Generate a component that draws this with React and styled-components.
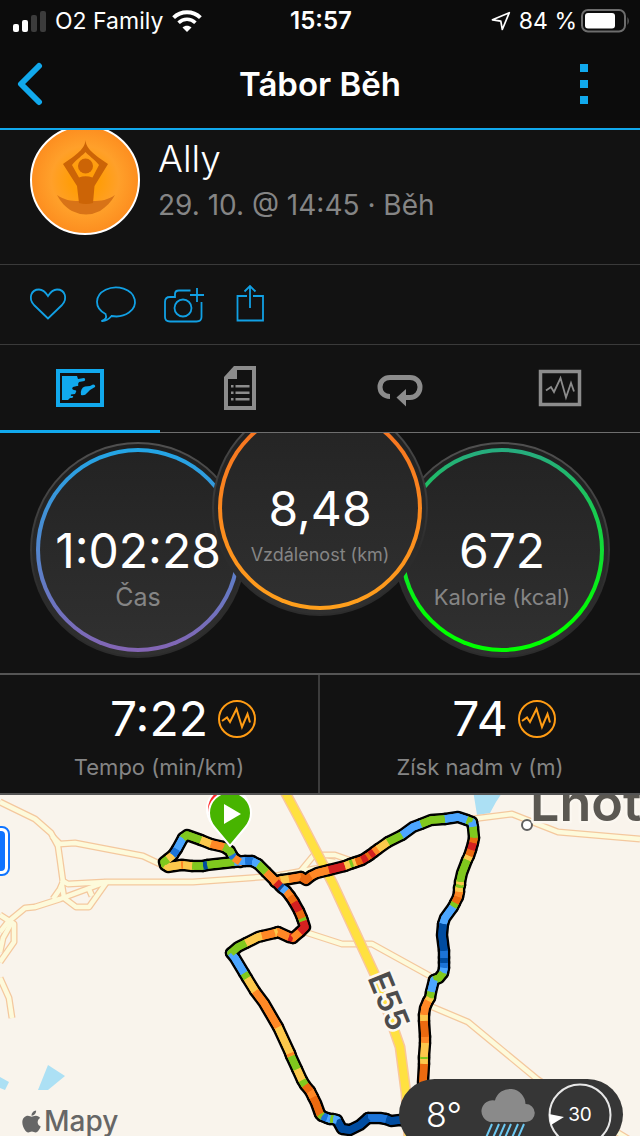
import styled, { createGlobalStyle, css } from "styled-components";
import { FaApple } from "react-icons/fa";

const GlobalStyle = createGlobalStyle`
  * {
    box-sizing: border-box;
  }
  body {
    margin: 0;
    background-color: #121212;
    font-family: Inter, "Liberation Sans", sans-serif;
    color: #ffffff;
  }
  button {
    font: inherit;
    color: inherit;
    background: none;
    border: 0;
    padding: 0;
    cursor: pointer;
  }
  svg {
    display: block;
  }
`;

const MainContainer = styled.div`
  display: flex;
  flex-direction: column;
  min-height: 100vh;
  overflow: hidden;
`;
const Header = styled.header`
  background-color: #0c0c0c;
  border-bottom: 2px solid #11a9ed;
`;
const StatusBar = styled.div`
  display: grid;
  grid-template-columns: 1fr auto 1fr;
  align-items: center;
  height: 40px;
  padding: 2px 10px 0 12px;
  line-height: 38px;
`;
const StatusGroup = styled.div`
  display: flex;
  align-items: center;
  justify-content: ${({ $end }) => ($end ? "flex-end" : "flex-start")};
  gap: ${({ $end }) => ($end ? "4px" : "9px")};
  font-size: 23px;
  white-space: nowrap;
`;
const Clock = styled.div`
  font-size: 24px;
  font-weight: 600;
`;
const NavBar = styled.nav`
  display: grid;
  grid-template-columns: 60px 1fr 60px;
  align-items: center;
  height: 88px;
  padding: 0 26px 0 0;
`;
const NavButton = styled.button`
  display: flex;
  justify-content: center;
  align-items: center;
  height: 88px;
`;
const NavTitle = styled.h1`
  margin: 0;
  padding-left: 26px;
  font-size: 33px;
  font-weight: 600;
  line-height: 44px;
  text-align: center;
`;

const ProfileContainer = styled.section`
  display: flex;
  gap: 18px;
  height: 135px;
  padding: 0 30px;
  overflow: hidden;
  border-bottom: 1px solid #3a3a3a;
`;
const Avatar = styled.div`
  flex: none;
  width: 110px;
  height: 110px;
  margin-top: -5px;
  border: 2px solid #ffffff;
  border-radius: 50%;
  background: radial-gradient(circle, #ff9d0a 20%, #ffa02a 45%, #fa7a14 100%);
`;
const ProfileInfo = styled.div`
  padding-top: 5px;
`;
const ProfileName = styled.div`
  font-size: 37px;
  font-weight: 300;
  line-height: 48px;
`;
const ProfileDate = styled.div`
  color: #858585;
  font-size: 28px;
  line-height: 44px;
`;

const ActionsContainer = styled.section`
  display: flex;
  height: 80px;
  padding-left: 14px;
  border-bottom: 1px solid #3a3a3a;
`;
const ActionButton = styled.button`
  display: flex;
  justify-content: center;
  align-items: center;
  width: 68px;
`;

const TabsContainer = styled.div`
  display: grid;
  grid-template-columns: repeat(4, 1fr);
  height: 88px;
`;
const Tab = styled.button`
  display: flex;
  justify-content: center;
  align-items: center;
  color: #8c8c8c;
  box-shadow: inset 0 -1px 0 #6e6e6e;
  ${({ $active }) =>
    $active &&
    css`
      color: #11a9ed;
      box-shadow: inset 0 -3px 0 #11a9ed;
    `}
`;

const GaugesContainer = styled.section`
  display: flex;
  justify-content: center;
  align-items: flex-start;
  height: 240px;
  overflow: hidden;
`;
const GaugeDisc = styled.div`
  flex: none;
  width: 216px;
  height: 216px;
  padding: 4px;
  margin: ${({ $raised }) => ($raised ? "-33px -34px 0" : "9px 0 0")};
  z-index: ${({ $raised }) => ($raised ? 1 : 0)};
  border: 2px solid transparent;
  border-radius: 50%;
  background:
    linear-gradient(#1f1f1f, #303030) padding-box,
    linear-gradient(#505050, #2c2c2c 70%) border-box;
`;
const GaugeRing = styled.div`
  height: 100%;
  padding-top: 69px;
  border: 4px solid transparent;
  border-radius: 50%;
  text-align: center;
  background:
    linear-gradient(#232323, #303030) padding-box,
    linear-gradient(${({ $from, $to }) => `${$from}, ${$to}`}) border-box;
`;
const Value = styled.div`
  font-size: 48px;
  line-height: 60px;
  white-space: nowrap;
`;
const Label = styled.div`
  color: #858585;
  font-size: ${({ $size }) => $size}px;
  line-height: 32px;
  white-space: nowrap;
`;

const StatsContainer = styled.section`
  display: grid;
  grid-template-columns: repeat(2, 1fr);
  border-top: 2px solid #555555;
  border-bottom: 2px solid #555555;
`;
const StatCell = styled.div`
  height: 118px;
  padding-top: 14px;
  text-align: center;
  &:first-child {
    border-right: 2px solid #3c3c3c;
  }
`;
const StatRow = styled.div`
  display: grid;
  grid-template-columns: 1fr auto 1fr;
  align-items: center;
  column-gap: 10px;
  margin-bottom: 2px;
`;
const PulseButton = styled.button`
  grid-column: 3;
  justify-self: start;
`;

const MapContainer = styled.section`
  position: relative;
  flex: 1;
  min-height: 341px;
  overflow: hidden;
  background-color: #f9f4ec;
`;
const MapDrawing = styled.svg`
  width: 100%;
  height: auto;
  font-family: Inter, "Liberation Sans", sans-serif;
`;
const MapCredit = styled.div`
  position: absolute;
  left: 19px;
  bottom: 0;
  display: flex;
  align-items: center;
  color: #666666;
  font-size: 28px;
  font-weight: 500;
  line-height: 30px;
`;
const WeatherPill = styled.div`
  position: absolute;
  right: 17px;
  bottom: -14px;
  display: flex;
  align-items: center;
  gap: 13px;
  width: 224px;
  height: 71px;
  padding: 0 11px 0 27px;
  border-radius: 36px;
  background-color: #363636;
`;
const Temperature = styled.div`
  flex: 1;
  font-size: 34px;
  font-weight: 300;
  line-height: 40px;
`;
const WindDial = styled.div`
  position: relative;
  display: flex;
  justify-content: center;
  align-items: center;
  width: 64px;
  height: 64px;
  font-size: 19px;
  svg {
    position: absolute;
    inset: 0;
  }
`;

const SignalIcon = () => (
  <svg width="34" height="22" viewBox="0 0 34 22" fill="#fff">
    <rect x="1" y="14" width="6" height="8" rx="2" />
    <rect x="10" y="10" width="6" height="12" rx="2" />
    <rect x="19" y="5" width="6" height="17" rx="2" fill="#3c3c3c" />
    <rect x="28" y="1" width="6" height="21" rx="2" fill="#3c3c3c" />
  </svg>
);

const WifiIcon = () => (
  <svg width="30" height="22" viewBox="0 0 30 22" fill="none" stroke="#fff">
    <path d="M1.6 7.6C9 .4 21 .4 28.400 7.600" strokeWidth="4" />
    <path d="M6.600 12.700C11.400 8.100 18.600 8.100 23.400 12.700" strokeWidth="3.600" />
    <path d="M15 22L10.500 17.500C13 15.200 17 15.200 19.500 17.500Z" fill="#fff" stroke="none" />
  </svg>
);

const LocationIcon = () => (
  <svg width="24" height="20" viewBox="0 0 24 20" fill="none" stroke="#fff">
    <path d="M18.300 1.700L1.500 8.800L9.800 10.200L11.300 18.500Z" strokeWidth="1.700" strokeLinejoin="round" />
  </svg>
);

const BatteryIcon = () => (
  <svg width="49" height="24" viewBox="0 0 49 24" fill="none">
    <rect x="1" y="1" width="43" height="21.500" rx="6" stroke="#6d6d6d" strokeWidth="2" />
    <rect x="4" y="4" width="30" height="15.500" rx="3" fill="#fff" />
    <path d="M46.500 8Q49 12 46.500 16Z" fill="#6d6d6d" />
  </svg>
);

const AvatarFigure = () => (
  <svg width="106" height="106" viewBox="2 2 106 106">
    <path
      d="M27 70C34 75 41 76 48 76H63C71 76 78 75 85 70C81 77 76 82 70 86Q56 93 42 86C35 82 31 77 27 70Z"
      fill="#d87317"
    />
    <path
      d="M55.500 15C55 22 51 27 33 39L47 61L49 78Q56 80 63 78L64.500 61L78 39C60 27 56 22 55.500 15ZM55.500 27C58 30 64 34 69 40L62.500 52.500Q55.500 50 49 52.500L42 40C47 34 53 30 55.500 27Z"
      fill="#cc6406"
    />
    <circle cx="55.500" cy="41" r="7.500" fill="#cc6406" />
  </svg>
);

const ActionIcon = ({ children }) => (
  <svg width="44" height="44" viewBox="0 1 44 44" fill="none" stroke="#11a0e4" strokeWidth="1.800">
    {children}
  </svg>
);

const MapTabIcon = () => (
  <svg width="48" height="48" viewBox="0 0 48 48" fill="currentColor">
    <rect x="2" y="6" width="44" height="34" fill="none" stroke="currentColor" strokeWidth="4" />
    <path d="M6 11H21L22 14L28 13Q30 14 28.500 16L23 17L22 19Q23 21 21 21L17 22Q15 24 18 25Q21 25 20 27L19 29L15 29.500Q14 31 17 31Q18 33 14 33L12 35H6Z" />
    <path d="M25 30Q24 23 29 21.500L34 21L37 19.500Q40 20 39 22L34 25L31 28Q29 31 25 30Z" />
  </svg>
);

const DetailsTabIcon = () => (
  <svg width="48" height="48" viewBox="0 0 48 48" fill="currentColor">
    <path d="M19 3H38V43H10V12" fill="none" stroke="currentColor" strokeWidth="4" />
    <path d="M8 12L18 1H21V14H8Z" />
    <path d="M15 20h2.500v2.500H15zM19.500 20h14v2.500h-14zM15 26.500h2.500V29H15zM19.500 26.500h14V29h-14zM15 33h2.500v2.500H15zM19.500 33h14v2.500h-14z" />
  </svg>
);

const LapsTabIcon = () => (
  <svg width="48" height="48" viewBox="0 0 48 48" fill="none">
    <path
      d="M14 31.500C8 31.500 4 27.500 4 22S8 12.500 14 12.500H34C40 12.500 44 16.500 44 22S40 32.500 34 32.500H27"
      stroke="currentColor"
      strokeWidth="5"
    />
    <path d="M20.500 32.500L30 24V41.500Z" fill="currentColor" />
  </svg>
);

const GraphTabIcon = () => (
  <svg width="48" height="48" viewBox="0 0 48 48" fill="none" stroke="currentColor">
    <rect x="4.500" y="6.500" width="39" height="33" strokeWidth="3.500" />
    <path d="M10 25.500L15 22L18 27L24.500 13L30 32.500L35 18L38 26.500" strokeWidth="1.800" />
  </svg>
);

const PulseIcon = () => (
  <svg width="38" height="38" viewBox="0 0 38 38" fill="none" stroke="#ff9c14" strokeWidth="2">
    <circle cx="19" cy="19" r="18" />
    <path d="M4 21L9 17.500L12 22L18.500 9L24 27L29.500 14L32 22.500" />
  </svg>
);

const tabs = [
  { id: "map", name: "Mapa", icon: <MapTabIcon /> },
  { id: "details", name: "Podrobnosti", icon: <DetailsTabIcon /> },
  { id: "laps", name: "Okruhy", icon: <LapsTabIcon /> },
  { id: "graphs", name: "Grafy", icon: <GraphTabIcon /> },
];

const gauges = [
  { value: "1:02:28", label: "Čas", size: 25, from: "#22a6e6", to: "#8465b4" },
  {
    value: "8,48",
    label: "Vzdálenost (km)",
    size: 18,
    from: "#f66f21",
    to: "#ffa01c",
    raised: true,
  },
  { value: "672", label: "Kalorie (kcal)", size: 22, from: "#27ab80", to: "#00ff00 85%" },
];

const stats = [
  { value: "7:22", label: "Tempo (min/km)" },
  { value: "74", label: "Získ nadm v (m)" },
];

const minorRoads = [
  "M0 802L35 819L51 833L58 846L60 860L63 882L60 889L53 899",
  "M52 836L60 844L75 843L143 856L162 865",
  "M61 880L68 884L106 882H193L275 876L330 866",
  "M106 882L95 886L60 899L35 907L25 908L8 922L0 932",
  "M0 915L14 924V942L0 962",
  "M12 922L3 938L0 952",
  "M62 885L64 898L76 907H89L106 883",
  "M88 887L92 896",
  "M300 872L314 855L335 855L352 861",
  "M320 860L335 862",
  "M472 819L512 814L558 832L640 839",
  "M300 930L308 933L342 944H372L430 976",
  "M430 1006L468 1022L537 1079L600 1122L640 1146",
  "M0 978L9 998L12 1018",
];

const highway = "M284 790L300 820L333 884L375 975L400 1047L406 1093L409 1140";

const RED = "#d42020";
const ORANGE = "#ff8826";
const RUST = "#ec6a10";
const YELLOW = "#fcc84c";
const GREEN = "#80c81e";
const SKY = "#4ca6ff";
const BLUE = "#1c74d8";
const NAVY = "#004ca0";

// pace-coloured pieces of the run, each one starts where the last one ended
const route = [
  [ORANGE, "275,882 281,880"],
  [YELLOW, "281,880 289,879"],
  [ORANGE, "289,879 301,877"],
  [RUST, "301,877 306,880 311,876"],
  [ORANGE, "311,876 317,873 329,870"],
  [RED, "329,870 345,866"],
  [YELLOW, "345,866 350,864"],
  [GREEN, "350,864 353,863"],
  [YELLOW, "353,863 356,862"],
  [RUST, "356,862 362,860"],
  [RED, "362,860 367,857"],
  [RUST, "367,857 370,855"],
  [RED, "370,855 374,852"],
  [ORANGE, "374,852 378,849"],
  [YELLOW, "378,849 388,842"],
  [GREEN, "388,842 402,835"],
  [SKY, "402,835 413,827 421,824"],
  [GREEN, "421,824 431,820 445,819"],
  [SKY, "445,819 458,817 467,820"],
  [GREEN, "467,820 472,822"],
  [SKY, "472,822 473,827"],
  [GREEN, "473,827 474,838"],
  [RUST, "474,838 473,843"],
  [RED, "473,843 471,850"],
  [RUST, "471,850 469,856"],
  [YELLOW, "469,856 467,860"],
  [GREEN, "467,860 462,873 460,882"],
  [YELLOW, "460,882 460,885"],
  [GREEN, "460,885 459,888"],
  [YELLOW, "459,888 459,892"],
  [ORANGE, "459,892 458,897"],
  [RUST, "458,897 455,903"],
  [GREEN, "455,903 453,907"],
  [SKY, "453,907 445,918 443,924"],
  [NAVY, "443,924 442,935 444,951"],
  [BLUE, "444,951 444,958"],
  [NAVY, "444,958 444,963"],
  [BLUE, "444,963 444,968"],
  [SKY, "444,968 443,973"],
  [GREEN, "443,973 439,978 434,980"],
  [SKY, "434,980 431,992"],
  [GREEN, "431,992 430,998"],
  [YELLOW, "430,998 428,1001"],
  [ORANGE, "428,1001 425,1008 424,1015"],
  [YELLOW, "424,1015 424,1021"],
  [RUST, "424,1021 425,1037"],
  [ORANGE, "425,1037 425,1043"],
  [YELLOW, "425,1043 424,1057"],
  [GREEN, "424,1057 424,1059"],
  [YELLOW, "424,1059 424,1064"],
  [RUST, "424,1064 423,1082 424,1110"],
  [NAVY, "424,1110 410,1122 400,1120 391,1121 386,1119"],
  [BLUE, "386,1119 380,1118 368,1118"],
  [NAVY, "368,1118 360,1125 350,1130 342,1129 337,1120"],
  [SKY, "337,1120 333,1119"],
  [GREEN, "333,1119 330,1119"],
  [SKY, "330,1119 327,1118"],
  [BLUE, "327,1118 322,1116"],
  [GREEN, "322,1116 320,1114"],
  [RUST, "320,1114 316,1103 313,1097"],
  [ORANGE, "313,1097 310,1091"],
  [RUST, "310,1091 305,1085"],
  [GREEN, "305,1085 302,1080"],
  [YELLOW, "302,1080 297,1069"],
  [GREEN, "297,1069 291,1056"],
  [ORANGE, "291,1056 290,1053"],
  [YELLOW, "290,1053 278,1027"],
  [ORANGE, "278,1027 264,1003 255,991"],
  [YELLOW, "255,991 247,978"],
  [GREEN, "247,978 244,973"],
  [SKY, "244,973 235,958 231,953"],
  [GREEN, "231,953 238,947 246,943"],
  [YELLOW, "246,943 258,937 262,936"],
  [ORANGE, "262,936 275,933"],
  [YELLOW, "275,933 278,932"],
  [ORANGE, "278,932 289,937"],
  [RED, "289,937 293,938"],
  [ORANGE, "293,938 300,932"],
  [RED, "300,932 305,927 303,921"],
  [GREEN, "303,921 302,918"],
  [RUST, "302,918 299,911"],
  [RED, "299,911 294,902"],
  [RUST, "294,902 290,896"],
  [ORANGE, "290,896 286,891"],
  [SKY, "286,891 282,888"],
  [NAVY, "282,888 280,886"],
  [RED, "280,886 276,882"],
  [ORANGE, "276,882 266,872"],
  [GREEN, "266,872 258,864"],
  [SKY, "258,864 252,861"],
  [BLUE, "252,861 245,861"],
  [SKY, "245,861 234,862"],
  [GREEN, "234,862 207,865"],
  [NAVY, "207,865 203,866"],
  [GREEN, "203,866 192,866"],
  [YELLOW, "192,866 183,865"],
  [ORANGE, "183,865 181,865"],
  [YELLOW, "181,865 168,867 165,865"],
  [GREEN, "165,865 164,862 168,859"],
  [YELLOW, "168,859 173,855"],
  [BLUE, "173,855 177,849"],
  [SKY, "177,849 183,838"],
  [GREEN, "183,838 187,835 201,840"],
  [YELLOW, "201,840 211,844"],
  [ORANGE, "211,844 224,847"],
  [GREEN, "224,847 230,851 232,855"],
  [BLUE, "232,855 234,858"],
  [ORANGE, "234,858 240,862"],
];

const RoutePieces = () =>
  route.map(([color, points]) => <polyline key={points} points={points} stroke={color} />);

const MapView = () => (
  <MapDrawing viewBox="0 795 640 341" role="img" aria-label="Mapa trasy" strokeLinejoin="round">
    <g fill="#ace0f4">
      <path d="M473 790L477 815L490 813L496 802L504 790Z" />
      <path d="M38 1090L48 1065L65 1076L48 1090Z" />
      <path d="M0 1077L9 1082L5 1090L0 1088Z" />
    </g>
    <g fill="none">
      {minorRoads.map((d) => (
        <path key={d} d={d} stroke="#f4c89e" strokeWidth="7" />
      ))}
      {minorRoads.map((d) => (
        <path key={d} d={d} stroke="#fdfadb" strokeWidth="4.500" />
      ))}
      <path d={highway} stroke="#f9c79c" strokeWidth="11" />
      <path d={highway} stroke="#ffe140" strokeWidth="8" />
    </g>
    <g>
      <rect x="-30" y="827" width="39" height="48" rx="7" fill="#fff" stroke="#0f74ff" strokeWidth="2" />
      <rect x="-26" y="831" width="31" height="40" rx="4" fill="#0f74ff" />
    </g>
    <g fill="none" strokeLinecap="round" stroke="#000" strokeWidth="12.500">
      {route.map(([, points]) => (
        <polyline key={points} points={points} />
      ))}
    </g>
    {/* round caps close the bends, the flat pass keeps the colour edges sharp */}
    <g fill="none" strokeWidth="7.500" strokeLinecap="round">
      <RoutePieces />
    </g>
    <g fill="none" strokeWidth="7.500">
      <RoutePieces />
    </g>
    <g stroke="#fff" strokeWidth="2">
      <path d="M228 842L212 824Q207 817 207 809A21 21 0 0 1 249 809Q249 817 244 824Z" fill="#ff2a2a" />
      <path d="M230 846L215 828Q209 821 209 813A21 21 0 0 1 251 813Q251 821 245 828Z" fill="#47b400" />
      <path d="M224 804L241 814L224 824Z" fill="#fff" stroke="none" />
    </g>
    <circle cx="527" cy="825" r="5" fill="#fff" stroke="#5f5f5f" strokeWidth="2" />
    <g stroke="#fbf7f0" strokeWidth="5" paintOrder="stroke" fontWeight="600">
      <text x="530" y="821" fontSize="52" fill="#5b5852">
        Lhot
      </text>
      <text
        transform="translate(389 1001) rotate(68)"
        textAnchor="middle"
        dominantBaseline="central"
        fontSize="32"
        fill="#4c4c4c"
      >
        E55
      </text>
    </g>
  </MapDrawing>
);

export default function App() {
  return (
    <MainContainer>
      <GlobalStyle />
      <Header>
        <StatusBar>
          <StatusGroup>
            <SignalIcon />
            <span>O2 Family</span>
            <WifiIcon />
          </StatusGroup>
          <Clock>15:57</Clock>
          <StatusGroup $end>
            <LocationIcon />
            <span>84 %</span>
            <BatteryIcon />
          </StatusGroup>
        </StatusBar>
        <NavBar>
          <NavButton aria-label="Zpět">
            <svg width="26" height="44" viewBox="0 0 26 44" fill="none">
              <path
                d="M22 4L4 22L22 40"
                stroke="#11a9ed"
                strokeWidth="6"
                strokeLinecap="round"
                strokeLinejoin="round"
              />
            </svg>
          </NavButton>
          <NavTitle>Tábor Běh</NavTitle>
          <NavButton aria-label="Nabídka">
            <svg width="8" height="40" viewBox="0 0 8 40" fill="#11a9ed">
              <path d="M0 0h8v8H0zM0 16h8v8H0zM0 32h8v8H0z" />
            </svg>
          </NavButton>
        </NavBar>
      </Header>

      <ProfileContainer>
        <Avatar>
          <AvatarFigure />
        </Avatar>
        <ProfileInfo>
          <ProfileName>Ally</ProfileName>
          <ProfileDate>29. 10. @ 14:45 · Běh</ProfileDate>
        </ProfileInfo>
      </ProfileContainer>

      <ActionsContainer>
        <ActionButton aria-label="To se mi líbí">
          <ActionIcon>
            <path d="M22 36.500L8 23C2 16.500 5 7.500 13 7.500C17 7.500 19.500 10 22 14C24.500 10 27 7.500 31 7.500C39 7.500 42 16.500 36 23Z" />
          </ActionIcon>
        </ActionButton>
        <ActionButton aria-label="Komentář">
          <ActionIcon>
            <path d="M11.500 32C13 35.500 12 37.500 7.500 39C12 39.500 14.500 37.500 17.500 34A19 14.500 0 1 0 11.500 32Z" />
          </ActionIcon>
        </ActionButton>
        <ActionButton aria-label="Přidat fotku">
          <ActionIcon>
            <path d="M28.500 8.500H17Q13 8.500 13 12V15H8Q3 15 3 20V35Q3 39.500 8 39.500H34.500Q39.500 39.500 39.500 35V20" />
            <circle cx="21" cy="26" r="8.500" />
            <path d="M28 13H42M35 6V20" />
          </ActionIcon>
        </ActionButton>
        <ActionButton aria-label="Sdílet">
          <ActionIcon>
            <path d="M17 14H7.500V38.500H33V14H23M20 4V26M14.500 9.500L20 4L25.500 9.500" />
          </ActionIcon>
        </ActionButton>
      </ActionsContainer>

      <TabsContainer role="tablist">
        {tabs.map((tab, i) => (
          <Tab
            key={tab.id}
            role="tab"
            aria-selected={i === 0}
            aria-label={tab.name}
            $active={i === 0}
          >
            {tab.icon}
          </Tab>
        ))}
      </TabsContainer>

      <GaugesContainer>
        {gauges.map((gauge) => (
          <GaugeDisc key={gauge.label} $raised={gauge.raised}>
            <GaugeRing $from={gauge.from} $to={gauge.to}>
              <Value>{gauge.value}</Value>
              <Label $size={gauge.size}>{gauge.label}</Label>
            </GaugeRing>
          </GaugeDisc>
        ))}
      </GaugesContainer>

      <StatsContainer>
        {stats.map((stat) => (
          <StatCell key={stat.label}>
            <StatRow>
              <span />
              <Value>{stat.value}</Value>
              <PulseButton aria-label={`Graf: ${stat.label}`}>
                <PulseIcon />
              </PulseButton>
            </StatRow>
            <Label $size={22}>{stat.label}</Label>
          </StatCell>
        ))}
      </StatsContainer>

      <MapContainer>
        <MapView />
        <MapCredit>
          <FaApple size={25} />
          Mapy
        </MapCredit>
        <WeatherPill>
          <Temperature>8°</Temperature>
          <svg width="56" height="62" viewBox="0 0 56 62">
            <path
              d="M11 38A11 11 0 1 1 16 16.500A15.500 15.500 0 0 1 46.500 20A9 9 0 0 1 47 38Z"
              fill="#8a8a8a"
            />
            <path
              d="M13 40L6 56M20 40L13 56M26 40L19 56M32 40L25 56M39 40L32 56M45 40L38 56"
              stroke="#6cc8f2"
              strokeWidth="2"
            />
          </svg>
          <WindDial>
            <svg width="64" height="64" viewBox="0 0 64 64">
              <circle cx="32" cy="32" r="30.500" fill="none" stroke="#e8e8e8" strokeWidth="2" />
              <path d="M1 31L16 34L3 42Z" fill="#fff" />
            </svg>
            30
          </WindDial>
        </WeatherPill>
      </MapContainer>
    </MainContainer>
  );
}
